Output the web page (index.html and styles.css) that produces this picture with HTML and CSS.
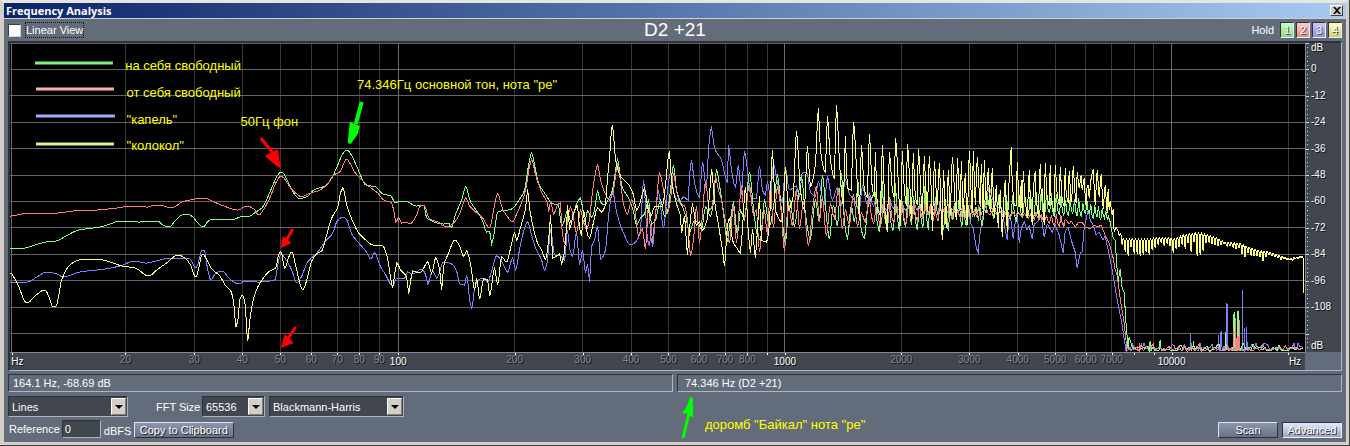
FILE: index.html
```html
<!DOCTYPE html>
<html lang="en">
<head>
<meta charset="utf-8">
<title>Frequency Analysis</title>
<link rel="stylesheet" href="styles.css">
</head>
<body>
<main class="window">
  <header class="titlebar">
    <h1 class="title">Frequency Analysis</h1>
    <button class="close" type="button" aria-label="Close">
      <svg width="8" height="7" viewBox="0 0 8 7"><path d="M0 0h2l2 2 2-2h2L5 3.5 8 7H6L4 5 2 7H0l3-3.5z"/></svg>
    </button>
  </header>
  <div class="content">
    <div class="toolbar">
      <label class="linear"><input type="checkbox" class="check"><span class="focus">Linear View</span></label>
      <output class="note">D2 +21</output>
      <div class="holds">
        <span>Hold</span>
        <button type="button" class="hold green">1</button>
        <button type="button" class="hold red">2</button>
        <button type="button" class="hold blue">3</button>
        <button type="button" class="hold yellow">4</button>
      </div>
    </div>

    <section class="graph" aria-label="Spectrum">
      <div class="plot">
        <svg class="layer" id="plot" viewBox="10 43 1296 309" preserveAspectRatio="none"></svg>
        <span class="mark legend-1">на себя свободный</span>
        <span class="mark legend-2">от себя свободный</span>
        <span class="mark legend-3">"капель"</span>
        <span class="mark legend-4">"колокол"</span>
        <span class="mark hum">50Гц фон</span>
        <span class="mark tone">74.346Гц основной тон, нота "ре"</span>
      </div>
      <div class="levels" id="levels"></div>
      <div class="freqs" id="freqs"></div>
    </section>

    <div class="status">
      <div class="readout">164.1 Hz, -68.69 dB</div>
      <div class="readout">74.346 Hz (D2 +21)</div>
    </div>

    <div class="controls">
      <div class="settings">
        <div class="row">
          <span class="drop lines">
            <select aria-label="Display style"><option>Lines</option></select>
            <span class="arrow"><svg width="8" height="4" viewBox="0 0 8 4"><path d="M0 0h8L4 4z"/></svg></span>
          </span>
          <label class="fft-label" for="fft">FFT Size</label>
          <span class="drop fft">
            <select id="fft"><option>65536</option></select>
            <span class="arrow"><svg width="8" height="4" viewBox="0 0 8 4"><path d="M0 0h8L4 4z"/></svg></span>
          </span>
          <span class="drop shape">
            <select aria-label="Window function"><option>Blackmann-Harris</option></select>
            <span class="arrow"><svg width="8" height="4" viewBox="0 0 8 4"><path d="M0 0h8L4 4z"/></svg></span>
          </span>
        </div>
        <div class="row second">
          <label for="ref">Reference</label>
          <input id="ref" class="ref" type="text" value="0">
          <span class="unit">dBFS</span>
          <button type="button" class="btn copy">Copy to Clipboard</button>
        </div>
      </div>
      <div class="actions">
        <div class="pointer">
          <svg width="16" height="44" viewBox="0 0 16 44"><path d="M2 42L8 17" stroke="#0f0" stroke-width="3"/><path d="M9 1L12 2V21L8 20L7 17L2 18V16L6 10z" fill="#0f0"/></svg>
          <span class="caption">доромб "Байкал" нота "ре"</span>
        </div>
        <button type="button" class="btn">Scan</button>
        <button type="button" class="btn pressed">Advanced</button>
      </div>
    </div>
  </div>
</main>
<script src="plot.js"></script>
</body>
</html>
```
FILE: styles.css
```css
* { box-sizing: border-box; }
html, body { margin: 0; }
body {
  background: #404040;
  font: 11px/14px "Liberation Sans", Arial, sans-serif;
  color: #fff;
}
button, select, input { font: inherit; color: inherit; margin: 0; padding: 0; border-radius: 0; }
.window {
  min-height: 445px;
  min-height: calc(100vh - 1px);
  margin: 0 1px 1px 0;
  display: flex;
  flex-direction: column;
  border: 3px solid #d4d0c8;
  border-left-width: 4px;
  border-top-color: #e8e5df;
  background: #636c7a;
}
.titlebar {
  display: flex;
  align-items: center;
  justify-content: space-between;
  height: 16px;
  padding: 0 3px 0 2px;
  border-bottom: 1px solid #d4d0c8;
  background: linear-gradient(90deg, #0a246a, #a6caf0);
}
.title { margin: 0; font: bold 11px/15px "Open Sans", "Noto Sans", sans-serif; }
.close {
  display: flex;
  align-items: center;
  justify-content: center;
  width: 13px;
  height: 11px;
  background: #d4d0c8;
  border: 1px solid;
  border-color: #fff #404040 #404040 #fff;
}
.content { flex: 1; display: flex; flex-direction: column; padding: 0 4px; }
.toolbar {
  display: grid;
  grid-template-columns: 1fr auto 1fr;
  align-items: center;
  height: 22px;
}
.linear { display: flex; align-items: center; gap: 4px; }
.check {
  appearance: none;
  width: 13px;
  height: 13px;
  margin: 0;
  background: #fff;
  border: 1px solid;
  border-color: #404040 #d4d0c8 #d4d0c8 #404040;
}
.focus { border: 1px dotted #111; line-height: 14px; }
.note { font-size: 19px; line-height: 22px; }
.holds { display: flex; justify-content: flex-end; align-items: center; gap: 2px; }
.holds > span { margin-right: 4px; font-size: 11px; }
.hold {
  width: 14px;
  height: 16px;
  line-height: 14px;
  border: 1px solid;
  border-color: #333 #eee #eee #333;
  text-shadow: 1px 1px #444;
}
.green { background: linear-gradient(#c4ffc4, #88d888); }
.red { background: linear-gradient(#ffc8c8, #e89090); }
.blue { background: linear-gradient(#c8c8ff, #9090e0); }
.yellow { background: linear-gradient(#ffffc0, #d0d078); }

.graph {
  flex: 1;
  display: grid;
  grid-template-columns: 1fr 36px;
  grid-template-rows: minmax(200px, 1fr) 18px;
  border: 2px solid #2d3138;
  border-right: 1px solid #aeb5c2;
  border-bottom: 1px solid #aeb5c2;
}
.plot { position: relative; background: #000; overflow: hidden; }
.layer { position: absolute; inset: 0; width: 100%; height: 100%; }
.layer path, .layer polyline { vector-effect: non-scaling-stroke; }
.trace { fill: none; stroke-width: 1; shape-rendering: crispEdges; }
.mark { position: absolute; color: #ff0; font-size: 13px; line-height: 16px; white-space: nowrap; }
.legend-1 { left: 8.9%; top: 4.7%; }
.legend-2 { left: 9%; top: 13.5%; }
.legend-3 { left: 9%; top: 22.2%; }
.legend-4 { left: 9%; top: 30.8%; }
.hum { left: 17.8%; top: 23%; }
.tone { left: 26.8%; top: 11%; }

.levels { position: relative; background: #41464f; border-left: 1px solid #818998; font-size: 10px; }
.freqs {
  position: relative;
  background: #41464f;
  border-top: 1px solid #818998;
  font-size: 10px;
}
.level, .freq { position: absolute; line-height: 12px; text-shadow: 1px 1px #111; white-space: nowrap; }
.level { left: 5px; transform: translateY(-50%); }
.freq { top: 1px; color: #868b92; transform: translateX(-50%); }
.freq.major { top: 3px; color: #fff; }
.freq.start { transform: none; }
.freq.end { transform: translateX(-100%); }
.tick { position: absolute; top: 0; width: 1px; height: 2px; background: #fff; }
.rung { position: absolute; left: 1px; width: 1px; height: 1px; background: #ddd; }
.rung.long { left: 0; width: 3px; }

.status { display: grid; grid-template-columns: 1fr 1fr; gap: 4px; margin-top: 3px; }
.readout {
  height: 18px;
  padding-left: 4px;
  line-height: 16px;
  border: 1px solid;
  border-color: #2d3138 #aeb5c2 #aeb5c2 #2d3138;
}
.readout + .readout { padding-left: 7px; }

.controls { display: flex; justify-content: space-between; margin-top: 4px; height: 46px; }
.row { display: flex; align-items: center; height: 21px; }
.row.second { height: 18px; margin-top: 3px; padding-left: 1px; }
.drop {
  display: flex;
  height: 21px;
  padding: 1px;
  background: #41464f;
  border: 1px solid;
  border-color: #2d3138 #aeb5c2 #aeb5c2 #2d3138;
}
.drop select { appearance: none; flex: 1; min-width: 0; padding-left: 2px; border: 0; background: none; }
.lines { width: 120px; }
.fft { width: 63px; margin-right: 4px; }
.shape { width: 135px; }
.fft-label { width: 46px; margin-left: 28px; }
.arrow {
  display: flex;
  align-items: center;
  justify-content: center;
  width: 15px;
  background: #d4d0c8;
  border: 1px solid;
  border-color: #fff #808080 #808080 #fff;
  pointer-events: none;
}
.ref {
  width: 39px;
  height: 18px;
  margin: 0 3px 0 2px;
  padding-left: 2px;
  background: #41464f;
  border: 1px solid;
  border-color: #2d3138 #aeb5c2 #aeb5c2 #2d3138;
}
.unit { width: 30px; padding-top: 4px; }
.btn {
  width: 60px;
  height: 16px;
  line-height: 13px;
  border: 1px solid;
  border-color: #d8e4f8 #2d3138 #2d3138 #d8e4f8;
  background: linear-gradient(#8d95a9, #69728a);
  text-shadow: 1px 1px #222;
}
.copy { width: 100px; margin-top: 2px; }
.pressed { background: linear-gradient(#e0eaff, #9aa5c0); border-color: #333 #e8eeff #e8eeff #333; }
.actions { display: flex; gap: 4px; width: 50%; padding-left: 6px; }
.actions .btn { margin-top: 26px; }
.pointer { display: flex; flex: 1; gap: 8px; color: #ff0; font-size: 13px; }
.caption { padding-top: 21px; line-height: 16px; }
```
FILE: plot.js
```javascript
const SVG = 'http://www.w3.org/2000/svg';
const plot = document.getElementById('plot');
const firstDecade = { 10: 11.5, 20: 125.5, 30: 194.5, 40: 242.5, 50: 280.5, 60: 311.5, 70: 337.5, 80: 359.5, 90: 379.5 };
const xOf = f => firstDecade[f] || 11.5 + 387 * Math.log10(f / 10);
const pct = x => ((x - 10) / 1296 * 100).toFixed(3) + '%';
const yOfLevel = db => 69.5 - db * 2.2;

let seed = 7;
const rnd = () => (seed = (seed * 16807) % 2147483647) / 2147483647;

function shape(tag, attrs) {
  const el = document.createElementNS(SVG, tag);
  for (const k in attrs) el.setAttribute(k, attrs[k]);
  plot.append(el);
}
function label(parent, cls, text, style) {
  const el = document.createElement('span');
  el.className = cls;
  el.textContent = text;
  Object.assign(el.style, style);
  document.getElementById(parent).append(el);
}

/* Grid and frequency scale */
for (let decade = 10; decade <= 10000; decade *= 10) {
  for (let n = 1; n < 10; n++) {
    const f = decade * n;
    if (f > 20000) break;
    const x = xOf(f);
    if (n > 1) shape('path', { d: `M${x} 43V352`, stroke: '#383838', class: 'trace' });
    label('freqs', 'tick', '', { left: pct(x) });
    if (n > 1 && f < 8000 && f !== 900) label('freqs', 'freq', f, { left: pct(x) });
    if (n === 1 && f > 10) label('freqs', 'freq major', f, { left: pct(x) });
  }
}
label('freqs', 'freq major start', 'Hz', { left: '0.1%' });
label('freqs', 'freq major end', 'Hz', { left: '99.7%' });
for (let db = 12; db >= -120; db -= 12) {
  shape('path', { d: `M10 ${Math.floor(yOfLevel(db)) + 0.5}H1306`, stroke: '#646464', class: 'trace' });
}
for (const f of [10, 100, 1000, 10000]) {
  shape('path', { d: `M${Math.floor(xOf(f)) + 0.5} 43V352`, stroke: '#6c6c6c', class: 'trace' });
}

/* Level scale */
const rise = y => ((y - 43) / 309 * 100).toFixed(3) + '%';
for (let db = 12; db > -128; db -= 2) {
  label('levels', db % 12 ? 'rung' : 'rung long', '', { top: rise(yOfLevel(db)) });
}
for (let db = 0; db >= -108; db -= 12) label('levels', 'level', db, { top: rise(yOfLevel(db)) });
label('levels', 'level', 'dB', { top: '1.5%' });
label('levels', 'level', 'dB', { top: '98%' });

/* Envelope lookup: list of [x, top, bottom] */
function envelope(keys, x) {
  let i = 1;
  while (i < keys.length - 1 && keys[i][0] < x) i++;
  const a = keys[i - 1], b = keys[i];
  const t = Math.max(0, Math.min(1, (x - a[0]) / (b[0] - a[0])));
  return [a[1] + (b[1] - a[1]) * t, a[2] + (b[2] - a[2]) * t];
}
/* Harmonic comb between two x positions */
function comb(from, to, step, keys, jitter) {
  const out = [];
  for (let f = step; f < 23000; f += step) {
    const x = xOf(f), next = xOf(f + step);
    if (x < from || x > to) continue;
    const w = next - x;
    const [hi, lo] = envelope(keys, x);
    const peak = hi + rnd() * jitter;
    const low = lo - rnd() * jitter;
    out.push([x, peak]);
    if (w > 3.5) out.push([x + w * 0.28, peak + (low - peak) * 0.72]);
    out.push([x + w * 0.6, low]);
    if (w > 3.5) out.push([x + w * 0.8, low - (low - peak) * 0.35]);
  }
  return out;
}
function floor(from, to, spikes) {
  const out = [];
  for (let x = from; x < to; x += 2) {
    const r = rnd();
    out.push([x, r > 0.85 ? 343 + rnd() * 4 : 347 + r * 5]);
  }
  for (const [x, y] of spikes) out.push([x - 1.5, 350], [x, y], [x + 1.5, 350]);
  return out.sort((a, b) => a[0] - b[0]);
}
/* Monotone cubic interpolation over the wide spans */
function smooth(p) {
  const slope = i => (p[i + 1][1] - p[i][1]) / Math.max(0.1, p[i + 1][0] - p[i][0]);
  const tangent = i => {
    if (i === 0 || i === p.length - 1) return 0;
    const a = slope(i - 1), b = slope(i);
    return a * b <= 0 ? 0 : 2 * a * b / (a + b);
  };
  const out = [];
  for (let i = 0; i < p.length - 1; i++) {
    out.push(p[i]);
    const w = p[i + 1][0] - p[i][0];
    if (w < 3) continue;
    const m0 = tangent(i) * w, m1 = tangent(i + 1) * w;
    for (let s = 1; s < w; s++) {
      const t = s / w, t2 = t * t, t3 = t2 * t;
      out.push([p[i][0] + s, (2 * t3 - 3 * t2 + 1) * p[i][1] + (t3 - 2 * t2 + t) * m0 + (3 * t2 - 2 * t3) * p[i + 1][1] + (t3 - t2) * m1]);
    }
  }
  out.push(p[p.length - 1]);
  return out;
}
const pts = s => s.trim().split(/\s+/).map(p => p.split(',').map(Number));
function trace(color, first, ...parts) {
  const all = [...smooth(first), ...parts.flat()];
  shape('polyline', { points: all.map(p => p[0].toFixed(1) + ',' + p[1].toFixed(1)).join(' '), stroke: color, class: 'trace' });
}

trace('#8080ff', pts(`
10,282 27,282 37,277 46,272 57,274 63,277 80,272 105,269 120,266 135,261 146,263 160,260 170,258 190,259 196,268 199,261
202,250 204,250 208,270 211,280 216,273 222,271 230,279 239,284 245,281 258,282 275,280 279,260 281,253 285,258 292,270
297,283 301,278 308,262 318,252 325,242 333,233 337,222 343,217 347,220 352,234 360,244 366,251 371,259 375,253 380,265
386,275 393,286 397,278 405,278 408,272 413,274 422,269 426,275 428,284 433,271 437,278 444,262 452,264 457,271 460,284
465,285 467,275 470,300 472,309 475,288 480,279 485,278 488,282 492,271 497,256 502,261 508,272 513,258 516,270 520,249
525,228 528,222 532,235 536,248 542,260 545,270 548,260 551,229 555,255 561,256 565,260 568,230 570,248 573,256 577,232
580,265 583,250 586,273 588,264 590,282 592,247 595,240 598,226 601,259 606,250 609,216 613,191 617,212 624,233 631,245
637,241 641,230 644,180 648,240 650,246 652,225 653,247 656,215 659,192 664,228 668,190 671,173 675,195 680,202 684,197
689,200 690,175 692,160 695,183 700,197 703,162 707,190 709,150 712,128 715,148 722,160 728,182 729,145 732,170 736,187
739,165 742,195 745,151 748,170 752,198 757,198 760,166 763,190 766,195 768,181 771,198 774,164 778,182 783,202 786,168
790,190 797,186 800,197 803,172 808,174 811,192 816,196 819,182 825,204 828,177 833,200 838,188 842,205 846,180 850,194
855,200 860,210 863,186 868,204`),
comb(870, 968, 71.9, [[870, 192, 217], [968, 203, 220]], 12),
pts(`970,216 972,225 974,228 977,248 979,252 981,232 984,215 986,205 990,186 993,198 996,205 1003,210 1006,230 1008,240
1010,215 1012,222 1014,239 1016,222 1018,212 1020,243 1022,228 1025,222 1028,230 1030,226 1033,239 1035,224 1038,222
1042,216 1045,237 1048,224 1053,232 1056,225 1060,235 1064,253 1066,231 1069,228 1072,240 1076,252 1078,268 1081,253
1083,252 1085,228 1089,210 1091,220 1094,225 1097,235 1100,232 1104,240 1106,236 1109,250 1113,270 1118,300 1123,325 1127,352`),
floor(1129, 1305, [[1191, 333], [1219, 335], [1222, 331], [1227, 303], [1228, 304], [1243, 290], [1245, 328], [1247, 327]]));

trace('#80ff80', pts(`
10,248 24,248 35,245 46,242 56,241 66,236 79,230 100,227 110,224 120,221 133,221 138,222 158,221 163,225 169,227 176,220
182,215 188,214 193,217 198,223 203,227 210,220 235,219 240,217 250,216 256,212 262,208 268,197 274,183 278,175 281,172
284,174 290,186 296,196 298,198 303,198 308,196 314,190 325,186 332,178 338,165 343,154 347,150 351,154 356,164 362,178
366,185 376,187 383,194 391,196 396,203 400,201 408,202 416,206 424,205 427,218 444,224 449,223 452,227 456,214 462,200
466,187 471,202 475,208 483,221 487,232 490,231 492,244 495,230 498,212 512,209 520,199 525,190 529,165 532,153 535,165
539,183 545,193 552,203 559,206 562,226 565,220 568,210 571,222 577,204 581,198 583,207 585,222 588,211 592,217 595,210
598,191 601,202 605,205 609,199 613,190 616,170 618,158 620,170 622,185 630,200 634,212 637,225 641,218 645,214 649,200
652,224 656,220 661,200 665,216 669,207 671,190 674,165 677,190 681,202 686,215 690,232 695,221 699,223 702,230 706,207
711,216 714,202 717,170 720,185 723,205 728,240 731,220 734,203 738,235 741,210 745,220 750,172 754,208 758,236 761,240
765,200 770,226 774,208 778,176 782,210 786,243 790,198 795,226 802,176 806,214 811,239 816,200 820,222 823,175 827,215
830,239 834,205 838,226 842,173 845,220 848,238 852,205 855,222 859,182 861,224 865,238 869,205`),
comb(872, 1000, 74.3, [[872, 174, 242], [940, 184, 235], [1000, 194, 222]], 22),
comb(1000, 1108, 143.8, [[1000, 191, 224], [1040, 190, 218], [1085, 199, 218], [1108, 209, 222]], 5),
pts(`1109,215 1111,222 1114,238 1116,240 1118,270 1119,281 1121,269 1123,288 1125,292 1127,325 1129,348 1130,337`),
floor(1132, 1305, [[1151, 341], [1161, 340], [1194, 341], [1226, 332], [1235, 312], [1238, 320], [1239, 311]]));

trace('#ff8080', pts(`
10,216 22,214 33,213 57,213 73,211 97,210 117,208 132,206 148,207 155,205 164,206 171,208 176,206 182,202 190,200 205,198
212,201 224,206 238,210 247,206 254,209 259,215 264,209 270,198 276,183 281,176 284,178 290,187 297,194 302,197 306,195
311,193 318,191 327,185 334,175 340,172 347,159 350,163 355,172 362,180 370,187 378,193 384,200 392,203 394,210 396,222
399,218 402,223 406,222 410,224 416,217 420,207 424,205 430,219 438,222 447,227 453,224 459,216 463,205 466,198 470,206
476,212 483,218 490,228 494,210 498,194 503,209 508,217 513,222 517,214 521,205 526,190 530,166 532,159 536,175 542,192
548,204 549,212 551,201 554,214 558,205 561,203 562,225 565,243 568,220 571,207 573,213 577,233 581,210 584,222 587,229
590,220 592,200 595,178 598,165 601,180 605,192 610,200 614,190 618,165 621,182 624,204 628,214 632,200 635,208 639,236
643,229 646,249 649,205 652,243 656,215 660,173 664,190 668,213 671,200 674,173 677,191 681,204 685,206 688,220 691,255
694,240 697,206 700,243 703,215 706,181 710,210 713,205 716,177 719,190 722,200 725,216 727,225 730,243 734,205 737,243
740,205 742,185 745,219 750,184 754,215 757,210 760,252 765,210 768,235 771,186 774,228 778,187 782,214 785,251 789,203
793,226 797,189 800,229 804,202 809,246 813,211 817,186 820,222 823,197 827,236 831,204 835,218 839,188 843,229 846,210
850,225 854,194 858,226 862,213 866,222`),
comb(868, 980, 71.9, [[868, 190, 230], [920, 197, 224], [980, 205, 218]], 9),
comb(980, 1062, 143.8, [[980, 205, 217], [1030, 211, 221], [1062, 214, 228]], 4),
pts(`1064,226 1066,219 1070,224 1072,221 1076,227 1079,223 1083,222 1086,227 1091,229 1095,225 1099,227 1102,225 1106,235
1110,243 1114,258 1116,270 1118,275 1122,305 1125,323 1128,351`),
floor(1130, 1305, [[1140, 343], [1234, 330], [1236, 318], [1239, 336], [1240, 320]]));

const tail = [];
for (let x = 1118; x < 1302; x += 3) {
  const keys = [[1118, 229, 240], [1124, 238, 257], [1150, 238, 257], [1160, 237, 248], [1175, 238, 255], [1186, 234, 256],
    [1200, 232, 256], [1216, 237, 248], [1226, 242, 247], [1240, 243, 256], [1258, 250, 262], [1272, 252, 260], [1290, 258, 261], [1302, 256, 257]];
  const [hi, lo] = envelope(keys, x);
  tail.push([x, hi], [x + 1, hi + 2], [x + 2, lo - rnd() * (lo - hi) * 0.6]);
}
trace('#ffff80', pts(`
10,273 17,283 27,303 36,295 45,290 49,297 53,307 56,306 62,279 71,264 84,259 97,259 110,262 122,266 135,268 149,276
157,270 168,262 178,255 185,258 190,264 196,277 199,268 201,257 203,254 206,258 212,269 220,276 226,286 231,291 234,304
236,327 238,321 240,299 242,295 245,302 248,341 250,320 254,298 259,285 270,271 276,268 279,254 281,251 285,268 289,257
292,252 296,266 300,283 303,290 307,280 312,261 318,253 322,251 326,238 332,218 338,207 341,192 343,188 347,205 352,219
359,233 366,240 373,245 383,246 388,259 391,279 393,288 395,274 397,263 401,270 407,277 409,294 411,280 413,271 420,273
424,268 428,262 432,273 436,258 440,270 442,290 444,266 449,253 455,240 459,244 464,256 467,251 471,265 475,290 477,278
480,299 484,279 488,280 490,296 495,268 498,285 502,257 507,262 511,248 515,233 517,240 521,227 526,208 528,189 530,208
535,233 538,243 542,250 546,259 549,240 551,215 553,258 557,256 560,254 562,264 565,250 567,226 568,205 570,229 574,213
578,206 580,228 582,236 584,210 588,235 590,238 594,222 598,208 602,212 606,204 608,178 610,158 612,128 613,126 616,160
621,176 630,186 634,195 637,210 640,205 643,193 645,188 648,206 651,217 655,207 663,206 666,185 669,155 670,151 672,180
677,204 681,216 682,233 685,216 688,255 690,230 693,205 697,225 700,222 703,230 708,218 710,195 712,169 715,200 719,225
723,250 725,266 728,225 730,218 733,240 738,249 741,253 743,230 746,187 749,235 751,253 753,229 756,258 758,230 760,196
762,240 767,242 770,225 773,150 776,210 783,222 786,167 789,210 794,195 797,131 801,190 805,210 808,146 811,186 816,165
819,108 821,150 826,172 828,116 831,160 835,178 837,105 840,160 844,205 846,136 848,188 852,190 854,122 858,185 860,220
862,145 865,190 868,197 870,134 873,190 875,197 876,152 878,208 881,215 883,145 886,218 888,232 890,152 893,190 895,198
896,138 900,205 901,226 903,151 905,190 907,206 908,144 911,196 912,221 914,153 916,197 918,205 919,149 922,201 923,215
925,156 927,197 928,212 930,156 932,190 933,231 935,161 938,205 940,163 943,240 944,170 947,228 949,170 951,214 953,157
956,207 957,220 958,158 961,210 962,161 964,213 966,173 968,225 970,151 973,213 974,151 976,205 978,157 981,207 982,164
984,215 985,160 987,205 989,168 991,212 993,168 995,218 997,185 999,228 1001,190 1003,237 1005,192 1006,180 1008,232
1010,177 1012,147 1013,184 1015,205`),
pts(`1017,205 1018,162 1019,185 1021,210 1022,180 1023,215 1024,171 1026,200 1028,218 1030,170 1031,198 1033,225 1034,190
1036,171 1037,200 1039,215 1041,164 1042,195 1043,188 1045,225 1046,163 1048,198 1050,206 1051,165 1052,202 1055,212
1056,165 1058,195 1060,205 1061,167 1063,200 1065,207 1066,168 1067,195 1069,203 1070,171 1072,202 1073,192 1074,166
1076,195 1077,203 1078,172 1080,188 1082,175 1083,190 1085,178 1086,196 1087,206 1088,185`),
pts(`1089,185 1090,198 1092,178 1094,169 1096,205 1098,170 1100,197 1102,174 1104,209 1106,185 1108,213 1109,189 1110,210
1111,201 1113,215 1114,209 1115,232 1117,227`), tail,
pts('1303,256 1304,258 1304,293'));

/* Legend samples */
[['#80f080', 35, 63, 113], ['#ffb0b0', 36, 89, 114], ['#a8a8ff', 36, 116, 115], ['#eeea90', 36, 144, 114]].forEach(([c, a, y, b]) =>
  shape('path', { d: `M${a} ${y}H${b}`, stroke: c, 'stroke-width': 3 }));

/* Arrows */
shape('path', { d: 'M261 138L274 154', stroke: '#f00', 'stroke-width': 3 });
shape('path', { d: 'M265 156L278 149L281 168L278 167z', fill: '#f00' });
shape('path', { d: 'M293 229L286 241', stroke: '#f00', 'stroke-width': 3 });
shape('path', { d: 'M283 236L292 243L281 248z', fill: '#f00' });
shape('path', { d: 'M296 327L288 339', stroke: '#f00', 'stroke-width': 3 });
shape('path', { d: 'M285 334L294 343L281 348z', fill: '#f00' });
shape('path', { d: 'M362 102L356 124', stroke: '#0f0', 'stroke-width': 4 });
shape('path', { d: 'M350 122L360 126L358 134L351 144L348 143z', fill: '#0f0' });
```
